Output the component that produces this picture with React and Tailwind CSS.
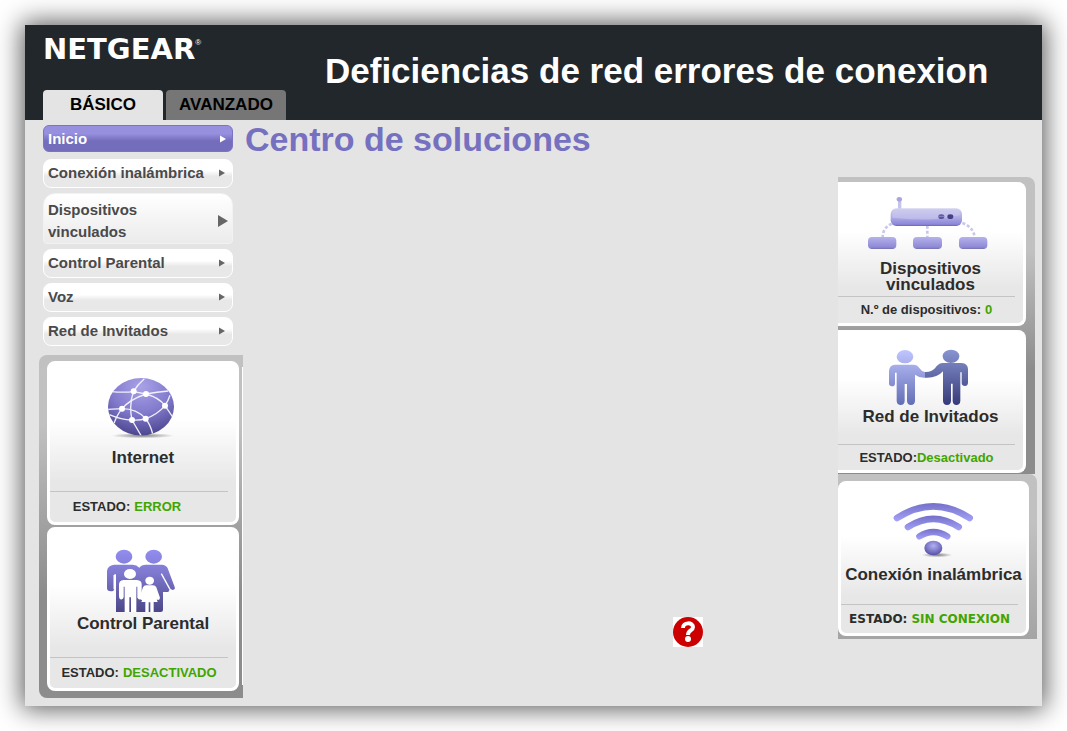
import React from "react";

const navItems = [
  { label: "Conexión inalámbrica" },
  { label: "Dispositivos vinculados", tall: true },
  { label: "Control Parental" },
  { label: "Voz" },
  { label: "Red de Invitados" },
];

function Gradient({ id, from, to }) {
  return (
    <linearGradient id={id} x1="0" y1="0" x2="0" y2="1">
      <stop offset="0" stopColor={from} />
      <stop offset="1" stopColor={to} />
    </linearGradient>
  );
}

function GlobeIcon() {
  return (
    <svg viewBox="225 90 216 222" className="h-[74px] w-[72px]" aria-hidden="true">
      <defs>
        <radialGradient id="globe" cx="0.5" cy="0.15" r="0.85">
          <stop offset="0" stopColor="#a9a2e8" />
          <stop offset="0.55" stopColor="#8179cb" />
          <stop offset="1" stopColor="#4d478f" />
        </radialGradient>
        <radialGradient id="globeShadow">
          <stop offset="0" stopColor="#555" stopOpacity="0.75" />
          <stop offset="1" stopColor="#555" stopOpacity="0" />
        </radialGradient>
        <clipPath id="globeClip">
          <ellipse cx="333" cy="182" rx="99" ry="86" />
        </clipPath>
      </defs>
      <ellipse cx="338" cy="269" rx="94" ry="8" fill="url(#globeShadow)" />
      <ellipse cx="333" cy="182" rx="99" ry="86" fill="url(#globe)" />
      <g clipPath="url(#globeClip)" fill="none" stroke="#f1f0fc" strokeWidth="4">
        <path d="M343 98Q322 116 311 136Q296 174 306 222L334 270" />
        <path d="M245 137Q280 140 311 137L348 144Q380 138 415 135" />
        <path d="M348 144Q300 160 276 188Q262 205 252 232" />
        <path d="M348 144Q388 155 405 179L428 213" />
        <path d="M405 179Q414 166 420 148" />
        <path d="M234 190L276 188Q320 188 347 218Q362 238 368 264" />
        <path d="M238 206Q275 222 306 222Q330 224 347 218Q382 206 405 179" />
      </g>
      <g fill="#fff">
        <circle cx="311" cy="136" r="9" />
        <circle cx="348" cy="144" r="9" />
        <circle cx="276" cy="188" r="9" />
        <circle cx="405" cy="179" r="9" />
        <circle cx="306" cy="222" r="9" />
        <circle cx="347" cy="218" r="9" />
      </g>
    </svg>
  );
}

function FamilyIcon() {
  return (
    <svg viewBox="225 81 216 204" className="h-[68px] w-[72px]" aria-hidden="true">
      <defs>
        <linearGradient id="family" gradientUnits="userSpaceOnUse" x1="0" y1="86" x2="0" y2="273">
          <stop offset="0" stopColor="#928df0" />
          <stop offset="0.4" stopColor="#7d77cc" />
          <stop offset="1" stopColor="#4c4688" />
        </linearGradient>
      </defs>
      <g fill="url(#family)">
        <ellipse cx="282" cy="107" rx="25" ry="21" />
        <ellipse cx="371" cy="107" rx="25" ry="21" />
        <path d="M252 131H308Q320 131 328 140Q334 131 348 131H395Q408 131 413 142L434 198Q437 205 428 207L420 203L415 213H399V267Q399 273 392 273H258V160H253V203Q252 211 243 211Q231 211 231 202V150Q233 133 252 131Z" />
      </g>
      <path d="M394 158L420 205" stroke="#fff" strokeWidth="4" fill="none" />
      <path d="M253 162V205" stroke="#fff" strokeWidth="5" fill="none" />
      <g fill="#fff">
        <ellipse cx="300" cy="159" rx="18" ry="15" />
        <path d="M280 177H321Q335 178 335 190V228Q334 237 326 235L322 230V197H319V273H303V229H298V273H284V197H281V228Q280 237 271 235Q267 233 267 226V190Q268 178 280 177Z" />
        <ellipse cx="359" cy="179" rx="13" ry="12" />
        <path d="M348 193H369Q376 193 379 199L390 230Q388 240 380 235L372 212L383 243H371V273H361V244H356V273H346V243H334L347 212L340 235Q333 240 328 231L339 199Q342 193 348 193Z" />
      </g>
    </svg>
  );
}

function RouterIcon() {
  return (
    <svg viewBox="120 90 375 198" className="h-[66px] w-[125px]" aria-hidden="true">
      <defs>
        <linearGradient id="router" x1="0" y1="0" x2="0" y2="1">
          <stop offset="0" stopColor="#d4d3f1" />
          <stop offset="0.45" stopColor="#b3b1e6" />
          <stop offset="0.9" stopColor="#8d87da" />
          <stop offset="1" stopColor="#6c66ad" />
        </linearGradient>
        <Gradient id="node" from="#b5b2ea" to="#8882d2" />
      </defs>
      <g fill="none" stroke="#c9c7ec" strokeWidth="8" strokeDasharray="9 6">
        <path d="M200 176Q173 188 173 218" />
        <path d="M307 182V218" />
        <path d="M412 174Q446 186 449 218" />
      </g>
      <path d="M219 100H229V134H219Z" fill="#c6c4ea" />
      <ellipse cx="223" cy="103" rx="8" ry="7" fill="#a9a5df" />
      <rect x="197" y="130" width="214" height="53" rx="17" fill="url(#router)" />
      <path d="M202 150Q202 134 216 134H392Q406 134 406 150Q350 165 280 163Q235 162 202 158Z" fill="#c9c8ed" opacity="0.6" />
      <ellipse cx="349" cy="155" rx="9" ry="7" fill="#5c559c" />
      <path d="M341 154H357" stroke="#8d88c9" strokeWidth="3" />
      <ellipse cx="376" cy="155" rx="9" ry="7" fill="#473f85" />
      <g fill="url(#node)">
        <rect x="129" y="216" width="85" height="36" rx="12" />
        <rect x="264" y="216" width="87" height="36" rx="12" />
        <rect x="402" y="216" width="85" height="36" rx="12" />
      </g>
      <path d="M138 250H205M273 250H342M411 250H478" stroke="#736da8" strokeWidth="2" />
    </svg>
  );
}

function GuestsIcon() {
  return (
    <svg viewBox="186 66 249 186" className="h-[62px] w-[83px]" aria-hidden="true">
      <defs>
        <linearGradient id="guestA" gradientUnits="userSpaceOnUse" x1="0" y1="74" x2="0" y2="240">
          <stop offset="0" stopColor="#c1c6ff" />
          <stop offset="1" stopColor="#626eb5" />
        </linearGradient>
        <linearGradient id="guestB" gradientUnits="userSpaceOnUse" x1="0" y1="74" x2="0" y2="240">
          <stop offset="0" stopColor="#8895d0" />
          <stop offset="1" stopColor="#363b78" />
        </linearGradient>
      </defs>
      <g fill="url(#guestA)">
        <ellipse cx="240" cy="95" rx="25" ry="20" />
        <path d="M210 119H265Q277 119 283 129Q289 139 300 141V158Q283 159 270 149V228Q269 240 258 240Q247 240 246 228V177H239V228Q238 240 227 240Q216 240 215 228V143H210V176Q209 184 201 184Q192 184 192 175V138Q193 120 210 119Z" />
      </g>
      <g fill="url(#guestB)">
        <ellipse cx="378" cy="94" rx="25" ry="20" />
        <path d="M352 114H410Q428 115 429 132V174Q428 183 420 183Q411 183 410 175V142H406V228Q405 240 394 240Q384 240 383 228V176H378V228Q377 240 366 240Q355 240 354 228V139Q336 160 300 158V141Q319 142 330 130Q338 116 352 114Z" />
      </g>
    </svg>
  );
}

function WifiIcon() {
  return (
    <svg viewBox="201 93 249 198" className="h-[66px] w-[83px]" aria-hidden="true">
      <defs>
        <linearGradient id="wave" gradientUnits="userSpaceOnUse" x1="0" y1="99" x2="0" y2="153">
          <stop offset="0" stopColor="#7470c9" />
          <stop offset="1" stopColor="#a4a1f8" />
        </linearGradient>
        <linearGradient id="wave2" gradientUnits="userSpaceOnUse" x1="0" y1="137" x2="0" y2="181">
          <stop offset="0" stopColor="#7470c9" />
          <stop offset="1" stopColor="#a4a1f8" />
        </linearGradient>
        <linearGradient id="wave3" gradientUnits="userSpaceOnUse" x1="0" y1="176" x2="0" y2="208">
          <stop offset="0" stopColor="#7470c9" />
          <stop offset="1" stopColor="#a4a1f8" />
        </linearGradient>
        <radialGradient id="dot" cx="0.5" cy="0.35" r="0.65">
          <stop offset="0" stopColor="#b3b0f3" />
          <stop offset="1" stopColor="#554fa6" />
        </radialGradient>
        <radialGradient id="dotShadow">
          <stop offset="0" stopColor="#444" stopOpacity="0.7" />
          <stop offset="1" stopColor="#444" stopOpacity="0" />
        </radialGradient>
      </defs>
      <g fill="none" strokeLinecap="round">
        <path d="M216 144Q325 74 434 144" stroke="url(#wave)" strokeWidth="20" />
        <path d="M249 171Q325 122 401 171" stroke="url(#wave2)" strokeWidth="20" />
        <path d="M283 199Q325 173 367 199" stroke="url(#wave3)" strokeWidth="19" />
      </g>
      <ellipse cx="336" cy="255" rx="46" ry="7" fill="url(#dotShadow)" />
      <ellipse cx="325" cy="234" rx="27" ry="22" fill="url(#dot)" />
    </svg>
  );
}

function NavLink({ label, tall }) {
  return (
    <a
      href="#"
      className={
        tall
          ? "flex h-[51px] items-center justify-between rounded-t-xl rounded-b-sm border border-[#f2f2f2] bg-linear-to-b from-white to-[#ebebeb] pt-1 pr-1 pl-1 text-[15px] leading-[22px] font-bold text-[#4a4a4a]"
          : "flex h-[29px] items-center justify-between rounded-lg border border-white bg-linear-to-b from-white from-40% to-[#e8e8e8] to-60% pr-[7px] pb-0.5 pl-1 text-[15px] leading-[22px] font-bold text-[#4a4a4a]"
      }
    >
      <span className={tall ? "w-[120px]" : ""}>{label}</span>
      <svg viewBox="0 0 10 12" className={tall ? "h-3 w-2.5" : "h-2 w-1.5"} aria-hidden="true">
        <path d="M0 0L10 6L0 12Z" fill="#666" />
      </svg>
    </a>
  );
}

function Card({ icon, title, label, value, className, iconClass, footClass, edgeClass, valueClass = "" }) {
  return (
    <a
      href="#"
      className={`flex flex-col overflow-hidden border-white bg-linear-to-b from-white from-35% to-[#e7e7e7] to-75% text-[#2c2c2c] ${edgeClass} ${className}`}
    >
      <span className={`flex items-end justify-center ${iconClass}`}>{icon}</span>
      <span className="text-center text-[17px] leading-4 font-bold whitespace-pre-line">{title}</span>
      <span
        className={`mt-auto mr-2 flex items-center justify-center gap-1 border-t border-[#c4c4c4] leading-4 font-bold whitespace-nowrap ${footClass}`}
      >
        <span>{label}</span>
        <span className={`text-[#3fa500] ${valueClass}`}>{value}</span>
      </span>
    </a>
  );
}

export default function App() {
  return (
    <div className="flex min-h-screen bg-white p-[25px] font-['Liberation_Sans',Arial,sans-serif]">
      <div className="flex min-w-0 flex-1 flex-col bg-[#e4e4e4] shadow-[0_0_24px_3px_rgba(0,0,0,0.65)]">
        <header className="flex items-center gap-[39px] bg-[#22272b] pl-[18px]">
          <div>
            <div className="flex h-[65px] items-start pt-2 text-white">
              <span className="font-['DejaVu_Sans',sans-serif] text-[29px] leading-8 font-bold">NETGEAR</span>
              <span className="pt-1 text-[8px] leading-3">®</span>
            </div>
            <div className="flex gap-[3px]">
              <button type="button" className="h-[30px] w-[120px] rounded-t bg-[#e4e4e4] text-[17px] leading-5 font-bold text-black">
                BÁSICO
              </button>
              <button type="button" className="h-[30px] w-[120px] rounded-t bg-[#767676] text-[17px] leading-5 font-bold text-black">
                AVANZADO
              </button>
            </div>
          </div>
          <h1 className="pb-1 text-[35px] leading-10 font-bold whitespace-nowrap text-white">Deficiencias de red errores de conexion</h1>
        </header>

        <div className="flex flex-1">
          <aside className="ml-3.5 w-[204px] shrink-0 pt-[5px] pb-2">
            <nav className="mr-2.5 ml-1 flex flex-col gap-[5px]">
              <a
                href="#"
                aria-current="page"
                className="mb-0.5 flex h-[27px] items-center justify-between rounded-md border border-[#7a73c8] bg-linear-to-b from-[#9690df] from-30% to-[#736dbc] to-60% pr-1.5 pl-1 text-[15px] leading-[22px] font-bold text-white"
              >
                <span>Inicio</span>
                <svg viewBox="0 0 10 12" className="h-2 w-1.5" aria-hidden="true">
                  <path d="M0 0L10 6L0 12Z" fill="#fff" />
                </svg>
              </a>
              {navItems.map((item) => (
                <NavLink key={item.label} {...item} />
              ))}
            </nav>
            <div className="mt-[9px] flex gap-[3px] rounded-l-lg bg-linear-to-b from-[#c1c1c1] from-20% to-[#8c8c8c] to-70% pt-1.5 pb-[7px] pl-2">
              <div className="flex flex-1 flex-col gap-0.5">
                <Card
                  icon={<GlobeIcon />}
                  title="Internet"
                  label="ESTADO:"
                  value="ERROR"
                  className="min-h-[164px]"
                  iconClass="h-[86px] pr-1"
                  footClass="h-[31px] pr-6 text-[13px]"
                  edgeClass="rounded-lg border-3"
                />
                <Card
                  icon={<FamilyIcon />}
                  title="Control Parental"
                  label="ESTADO:"
                  value="DESACTIVADO"
                  className="min-h-[164px]"
                  iconClass="h-[86px] pr-1"
                  footClass="h-[31px] text-[13px]"
                  edgeClass="rounded-lg border-3"
                />
              </div>
              <div className="my-1.5 w-px bg-white" />
            </div>
          </aside>

          <main className="flex min-w-0 flex-1 flex-col pl-0.5">
            <h2 className="text-[34px] leading-[38px] font-bold text-[#7670c0]">Centro de soluciones</h2>
            <button
              type="button"
              aria-label="Ayuda"
              className="mt-auto mr-[135px] mb-[59px] size-[30px] self-end bg-white"
            >
              <svg viewBox="0 0 30 30" className="size-[30px]" aria-hidden="true">
                <circle cx="15" cy="15" r="15" fill="#cc0000" />
                <path d="M10 11C10 5 20 5 20 10C20 14 15 13 15 18" fill="none" stroke="#fff" strokeWidth="4" />
                <circle cx="15" cy="22" r="3" fill="#fff" />
              </svg>
            </button>
          </main>

          <section className="mr-[5px] flex w-[199px] shrink-0 flex-col pt-[57px]">
            <div className="mr-0.5 flex flex-col gap-1 rounded-tr-lg bg-linear-to-b from-[#c1c1c1] from-25% to-[#8c8c8c] to-65% pt-[5px] pr-[9px] pb-px">
              <Card
                icon={<RouterIcon />}
                title={"Dispositivos\nvinculados"}
                label="N.º de dispositivos:"
                value="0"
                className="min-h-[144px]"
                iconClass="h-[79px] pr-1.5"
                footClass="h-[27px] text-[13px]"
                edgeClass="rounded-r-lg border-r-3 border-b-3"
              />
              <Card
                icon={<GuestsIcon />}
                title="Red de Invitados"
                label="ESTADO:"
                value="Desactivado"
                className="min-h-[143px]"
                iconClass="h-[79px] pr-1"
                footClass="h-[26px] text-[13px]"
                edgeClass="rounded-r-lg border-r-3 border-b-3"
                valueClass="-ml-1"
              />
            </div>
            <div className="rounded-tr-lg bg-linear-to-b from-[#c1c1c1] from-30% to-[#a4a4a4] pt-[7px] pr-2 pb-[3px]">
              <Card
                icon={<WifiIcon />}
                title="Conexión inalámbrica"
                label="ESTADO:"
                value="SIN CONEXION"
                className="min-h-[155px]"
                iconClass="h-[83px]"
                footClass="h-[29px] font-['DejaVu_Sans',sans-serif] text-[12px]"
                edgeClass="rounded-lg border-3"
              />
            </div>
          </section>
        </div>
      </div>
    </div>
  );
}
